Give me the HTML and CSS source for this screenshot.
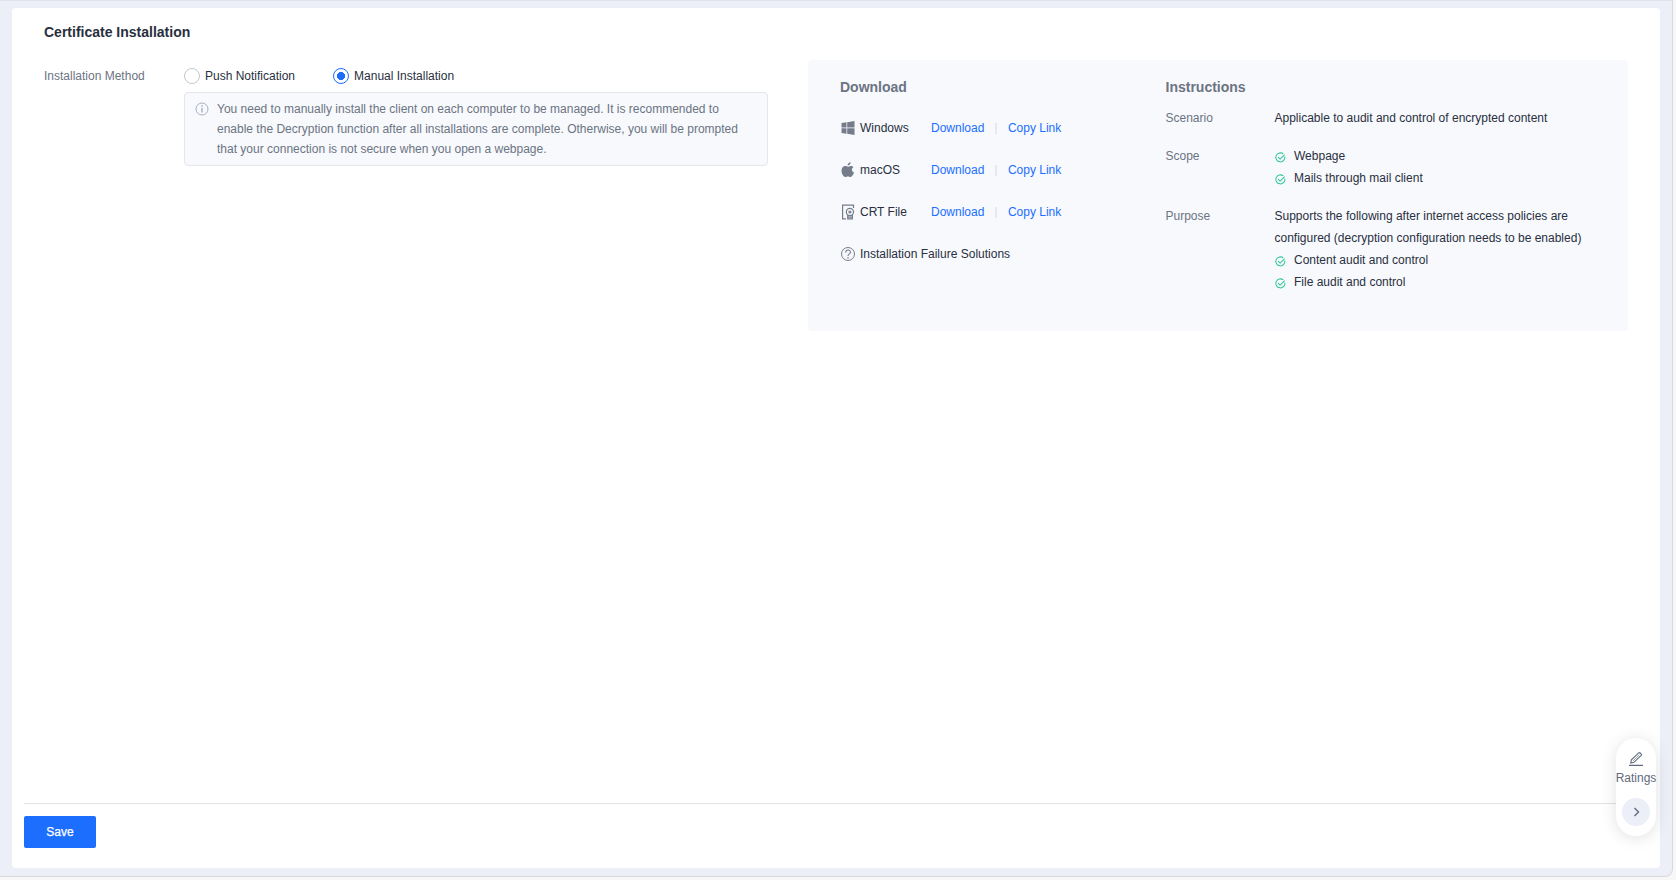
FILE: index.html
```html
<!DOCTYPE html>
<html lang="en">
<head>
<meta charset="utf-8">
<title>Certificate Installation</title>
<link rel="stylesheet" href="styles.css">
</head>
<body>
<svg class="defs" aria-hidden="true">
  <symbol id="check" viewBox="0 0 12 12">
    <path d="M10.700 5A4.900 4.900 0 1 1 9 2.100M3.300 5.600l2.300 2.200 5-5" fill="none" stroke="#2cc796" stroke-width="1.100"/>
  </symbol>
</svg>
<div class="shell">
  <main class="panel">
    <h1 class="title">Certificate Installation</h1>
    <div class="content">
      <div class="form-label">Installation Method</div>
      <div class="form-field">
        <div class="radios">
          <label class="radio"><span class="dot"></span>Push Notification</label>
          <label class="radio"><span class="dot checked"></span>Manual Installation</label>
        </div>
        <div class="tip">
          <svg class="tip-icon" width="14" height="14" viewBox="0 0 14 14" fill="none" stroke="#a9afbe"><circle cx="7" cy="7" r="6"/><path d="M7 3.300v1.400M7 5.900v4.600" stroke-width="1.400"/></svg>
          <p>You need to manually install the client on each computer to be managed. It is recommended to enable the Decryption function after all installations are complete. Otherwise, you will be prompted that your connection is not secure when you open a webpage.</p>
        </div>
      </div>
      <section class="card">
        <div class="downloads">
          <h2>Download</h2>
          <div class="row">
            <svg width="14" height="14" viewBox="0 0 14 14" fill="#757d8a"><path d="M.5 2l5-.7v5.300h-5zM6.200 1.200L13.500 0v6.600H6.200zM.5 7.300h5v5.400l-5-.8zM6.200 7.300h7.300V14l-7.300-1.200z"/></svg>
            <span class="name">Windows</span><a>Download</a><i class="sep"></i><a>Copy Link</a>
          </div>
          <div class="row">
            <svg width="14" height="16" viewBox="0 0 14 16" fill="#757d8a"><path d="M9.600 0c.1 1.900-1.200 3.400-3 3.400C6.500 1.700 8 .3 9.600 0zM12.400 5.300c-2.200 1.400-1.800 4.300.6 5.300-.6 1.700-1.900 4.400-3.500 4.400-1 0-1.400-.6-2.600-.6s-1.600.6-2.500.6C2.500 15 .5 11.600.5 8.800c0-3 1.800-4.700 3.700-4.700 1.100 0 1.900.7 2.800.7.900 0 1.700-.8 3-.8 1 0 1.900.5 2.400 1.300z"/></svg>
            <span class="name">macOS</span><a>Download</a><i class="sep"></i><a>Copy Link</a>
          </div>
          <div class="row">
            <svg width="14" height="16" viewBox="0 0 14 16" fill="none" stroke="#757d8a" stroke-width="1.200"><path d="M5 14.900H1.600V1.100h10.900v3"/><circle cx="8.900" cy="8" r="3.600"/><circle cx="8.900" cy="8" r="1"/><path d="M6.700 11v3.900h4.700V11M6.700 13.200h4.700"/></svg>
            <span class="name">CRT File</span><a>Download</a><i class="sep"></i><a>Copy Link</a>
          </div>
          <div class="row">
            <svg width="14" height="14" viewBox="0 0 14 14" fill="none" stroke="#757d8a"><circle cx="7" cy="7" r="6.500"/><path d="M4.700 5.600C4.700 2.200 9.500 2.400 9.500 5.200 9.500 6.900 7 7 7 9" stroke-width="1.100"/><path d="M7 10.200v1.400" stroke-width="1.400"/></svg>
            <span>Installation Failure Solutions</span>
          </div>
        </div>
        <div class="instructions">
          <h2>Instructions</h2>
          <dl>
            <dt>Scenario</dt>
            <dd>Applicable to audit and control of encrypted content</dd>
            <dt>Scope</dt>
            <dd>
              <div class="item"><svg><use href="#check"/></svg>Webpage</div>
              <div class="item"><svg><use href="#check"/></svg>Mails through mail client</div>
            </dd>
            <dt>Purpose</dt>
            <dd>Supports the following after internet access policies are configured (decryption configuration needs to be enabled)
              <div class="item"><svg><use href="#check"/></svg>Content audit and control</div>
              <div class="item"><svg><use href="#check"/></svg>File audit and control</div>
            </dd>
          </dl>
        </div>
      </section>
    </div>
    <footer class="footer"><button class="save">Save</button></footer>
  </main>
</div>
<aside class="ratings">
  <svg width="14" height="14" viewBox="0 0 14 14" fill="none" stroke="#626b7d" stroke-width="1.100"><path d="M0 13.400h14M1.700 11l.7-3.200L9.700.9Q10.500.3 11.200 1l1 1q.6.7 0 1.400L4.900 10.300z"/><path d="M4 9l6.300-6.300" stroke-width=".6"/></svg>
  <span>Ratings</span>
  <div class="expand"><svg width="8" height="10" viewBox="0 0 8 10" fill="none" stroke="#626b7d" stroke-width="1.400"><path d="M2.500 1l4 4-4 4"/></svg></div>
</aside>
</body>
</html>
```
FILE: styles.css
```css
* { box-sizing: border-box; margin: 0; padding: 0; }
body {
  height: 880px;
  overflow: hidden;
  background: #f7f7f7;
  color: #292f3d;
  font: 12px/20px "Liberation Sans", Arial, sans-serif;
}
.defs { position: absolute; width: 0; height: 0; }
.shell {
  width: 1673px;
  height: 877px;
  padding: 7px 12px 8px;
  background: #eceff8;
  border: 1px solid #d8d9df;
  border-top-color: #e0e3ec;
  border-left: 0;
  border-radius: 0 0 8px 0;
}
.panel {
  display: flex;
  flex-direction: column;
  height: 860px;
  padding: 14px 12px 0;
  background: #fff;
  border-radius: 4px;
}
.title { padding-left: 20px; font-size: 14px; line-height: 20px; }
.content { display: flex; flex: 1; padding: 18px 20px 0; }
.form-label { width: 140px; padding-top: 6px; color: #6c7482; }
.form-field { width: 584px; padding-top: 6px; }
.radios { display: flex; gap: 38px; }
.radio { display: flex; align-items: center; gap: 5px; }
.dot { width: 16px; height: 16px; border: 1px solid #c3c7d2; border-radius: 50%; }
.checked { border-color: #1c6eff; background: radial-gradient(circle, #1c6eff 3.8px, transparent 4.3px); }
.tip {
  display: flex;
  gap: 8px;
  height: 74px;
  margin-top: 6px;
  padding: 6px 20px 6px 10px;
  background: #f7f9fd;
  border: 1px solid #e4e6eb;
  border-radius: 4px;
  color: #6c7482;
}
.tip-icon { flex: none; margin-top: 3px; }
.card {
  display: flex;
  width: 820px;
  height: 271px;
  margin-left: 40px;
  padding: 17px 22px 17px 32px;
  background: #f7f9fd;
  border-radius: 4px;
}
h2 { color: #6c7482; font-size: 14px; line-height: 20px; }
.downloads { flex: none; width: 325.5px; }
.row { display: flex; align-items: center; height: 20px; margin-top: 22px; }
h2 + .row { margin-top: 21px; }
.row svg { margin: 0 5px 0 1px; }
.name { width: 71px; }
a { color: #1c6eff; }
.sep { width: 2px; height: 11px; margin: 1px 11px 0 10.500px; background: #e4e8ef; }
.instructions { flex: 1; }
dl { display: grid; grid-template-columns: 109px 330px; row-gap: 16px; padding-top: 10px; line-height: 22px; }
dt { color: #6c7482; }
.item { display: flex; align-items: center; gap: 8px; }
.item svg { width: 11px; height: 11px; margin: 2px 0 0 .5px; }
.footer { flex: none; height: 65px; width: 1624px; padding-top: 12px; border-top: 1px solid #e0e2e4; }
.save {
  width: 72px;
  height: 32px;
  background: #1c6eff;
  border: 0;
  border-radius: 2px;
  color: #fff;
  font: 12px "Liberation Sans", Arial, sans-serif;
  -webkit-text-stroke: .25px #fff;
}
.ratings {
  position: absolute;
  top: 738px;
  left: 1616px;
  display: flex;
  flex-direction: column;
  align-items: center;
  width: 40px;
  height: 98px;
  padding-top: 14px;
  background: #fff;
  border-radius: 20px;
  box-shadow: 0 2px 16px rgba(0, 0, 0, .12);
  color: #626b7d;
}
.ratings span { margin: 2px 0 10px; }
.expand { display: grid; place-items: center; width: 28px; height: 28px; background: #eceff8; border-radius: 50%; }
```
